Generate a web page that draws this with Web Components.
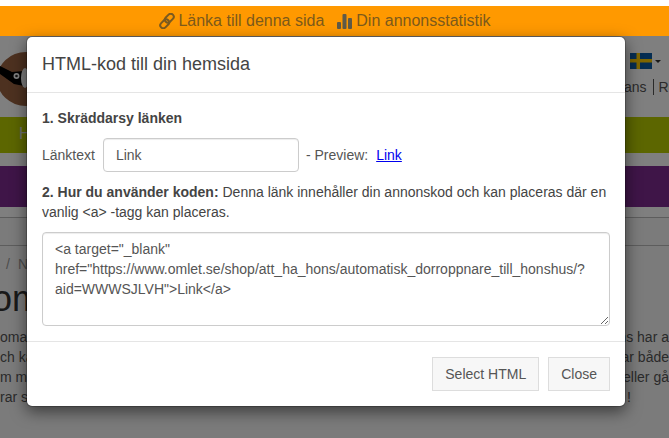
<!DOCTYPE html>
<html lang="sv">
<head>
<meta charset="utf-8">
<title>HTML-kod till din hemsida</title>
<style>
  html, body { margin: 0; height: 438px; overflow: hidden; background: #fff; }
  body { position: relative; font: 14px/20px "Liberation Sans", Arial, sans-serif; color: #444; }
</style>
</head>
<body>
<promo-bar>
  <span slot="link">Länka till denna sida</span>
  <span slot="stats">Din annonsstatistik</span>
</promo-bar>
<site-page></site-page>
<html-modal>
  <span slot="title">HTML-kod till din hemsida</span>
</html-modal>

<script>
class PromoBar extends HTMLElement {
  constructor() {
    super();
    this.attachShadow({ mode: 'open' });
    this.shadowRoot.innerHTML = `
      <style>
        :host { display: block; margin-top: 6px; height: 30px; background: #ff9900; color: #7c5a1c; font-size: 16px; }
        .row { height: 30px; display: flex; align-items: center; justify-content: center; padding-right: 19px; gap: 13px; }
        .item { display: flex; align-items: center; gap: 3px; }
        svg { display: block; }
      </style>
      <div class="row">
        <div class="item">
          <svg width="16" height="16" viewBox="0 0 16 16" fill="none" stroke="#7a5a20" stroke-width="2">
            <rect x="7.3" y="0.2" width="6" height="10" rx="3" transform="rotate(45 10.3 5.2)"/>
            <rect x="2.7" y="5.8" width="6" height="10" rx="3" transform="rotate(45 5.7 10.8)"/>
          </svg>
          <slot name="link"></slot>
        </div>
        <div class="item">
          <svg width="16" height="15" viewBox="0 0 16 15" fill="#5f5a48">
            <rect x="0" y="8" width="4" height="7" rx="1"/>
            <rect x="5.5" y="0" width="4" height="15" rx="1"/>
            <rect x="11" y="4" width="4" height="11" rx="1"/>
          </svg>
          <slot name="stats"></slot>
        </div>
      </div>`;
  }
}

// Sidan bakom dialogen, syns bara i kanterna
class SitePage extends HTMLElement {
  constructor() {
    super();
    this.attachShadow({ mode: 'open' });
    this.shadowRoot.innerHTML = `
      <style>
        :host { display: block; height: 402px; overflow: hidden; background: #fff; color: #555; }
        .head { height: 81px; display: flex; justify-content: space-between; align-items: flex-start; }
        .logo { margin-top: 16px; display: block; }
        .tools { padding-top: 17px; width: 42px; display: flex; flex-direction: column; align-items: flex-start; }
        .flag-row { display: flex; align-items: center; gap: 3px; margin-left: 3px; }
        .caret { width: 0; height: 0; border: 3.5px solid transparent; border-top-color: #333; border-bottom: 0; }
        .links { margin: 10px 0 0 -3px; font-size: 14px; line-height: 16px; white-space: nowrap; display: flex; gap: 6px; }
        .links i { font-style: normal; border-left: 1px solid #555; padding-left: 5px; }
        .olive { height: 36px; background: #b8cc00; color: #ddd; padding-left: 19px; line-height: 34px; font-size: 16px; }
        .purple { height: 41px; margin-top: 13px; background: #7e2a90; }
        .lower { margin-top: 10px; background: #f7f7f7; height: 221px; }
        .band { height: 27px; border-top: 1px solid #bbb; border-bottom: 1px solid #bbb; background: #f7f7f7; }
        .trail { height: 33px; padding: 8px 0 0 6px; box-sizing: border-box; color: #999; display: flex; gap: 8px; }
        h1 { margin: 0 0 0 -8px; font-size: 36px; line-height: 40px; font-weight: 400; color: #333; }
        .lines { margin-top: 8px; }
        .line { display: flex; justify-content: space-between; height: 20px; line-height: 20px; white-space: nowrap; }
      </style>
      <div class="head">
        <svg class="logo" width="40" height="56" viewBox="0 0 40 56">
          <ellipse cx="26" cy="27" rx="29" ry="27" fill="#9a6240"/>
          <path d="M0 14 L12 20 L24 19 L24 34 L14 32 L0 22Z" fill="#000"/>
          <circle cx="16.5" cy="24" r="3" fill="#fff"/>
          <circle cx="16.5" cy="24" r="1.3" fill="#222"/>
          <ellipse cx="25" cy="26" rx="4" ry="10" fill="#fff"/>
        </svg>
        <div class="tools">
          <div class="flag-row">
            <svg width="22" height="16" viewBox="0 0 22 16">
              <rect width="22" height="16" fill="#0b5aa5"/>
              <rect x="6.5" width="3.5" height="16" fill="#fecc00"/>
              <rect y="6" width="22" height="3.5" fill="#fecc00"/>
            </svg>
            <span class="caret"></span>
          </div>
          <div class="links"><span>ans</span><i>Re</i></div>
        </div>
      </div>
      <div class="olive">H</div>
      <div class="purple"></div>
      <div class="lower">
        <div class="band"></div>
        <div class="trail"><span>/</span><span>N</span></div>
        <h1>om</h1>
        <div class="lines">
          <div class="line"><span>oma</span><span>ns har a</span></div>
          <div class="line"><span>ch ka</span><span>ar både</span></div>
          <div class="line"><span>m mö</span><span>eller gå</span></div>
          <div class="line"><span>rar s</span><span style="margin-right:38px">!</span></div>
        </div>
      </div>`;
  }
}

class HtmlModal extends HTMLElement {
  constructor() {
    super();
    this.attachShadow({ mode: 'open' });
    this.shadowRoot.innerHTML = `
      <style>
        :host { display: block; position: absolute; left: 0; top: 36px; width: 669px; height: 402px; background: rgba(0,0,0,.5); padding-left: 26px; box-sizing: border-box; }
        .dialog { width: 600px; box-sizing: border-box; background: #fff; background-clip: padding-box; border: 1px solid rgba(0,0,0,.2); border-radius: 6px; box-shadow: 0 5px 15px rgba(0,0,0,.5); }
        header { height: 56px; box-sizing: border-box; border-bottom: 1px solid #e5e5e5; padding: 17px 15px 0; font-size: 18px; line-height: 20px; color: #444; }
        .body { padding: 15px; }
        .step { margin: 0; }
        .row { display: flex; align-items: center; margin: 10px 0; color: #555; height: 34px; }
        input, textarea { box-sizing: border-box; border: 1px solid #ccc; border-radius: 4px; background: #fff; color: #555; font: 14px/20px "Liberation Sans", Arial, sans-serif; padding: 6px 12px; margin: 0; box-shadow: inset 0 1px 1px rgba(0,0,0,.075); outline: 0; }
        input { width: 196px; height: 34px; margin: 0 7px 0 8px; }
        a { color: #0000ee; margin-left: 8px; }
        textarea { display: block; width: 568px; height: 94px; margin-top: 10px; }
        footer { border-top: 1px solid #e5e5e5; padding: 15px; display: flex; justify-content: flex-end; gap: 9px; }
        button { height: 34px; box-sizing: border-box; border: 1px solid #ddd; background: #f7f7f7; color: #555; font: 14px/20px "Liberation Sans", Arial, sans-serif; padding: 6px 12px; }
      </style>
      <div class="dialog">
        <header><slot name="title"></slot></header>
        <div class="body">
          <p class="step"><b>1. Skräddarsy länken</b></p>
          <div class="row">
            <span>Länktext</span>
            <input type="text" value="Link">
            <span>- Preview:</span>
            <a href="#">Link</a>
          </div>
          <p class="step"><b>2. Hur du använder koden:</b> Denna länk innehåller din annonskod och kan placeras där en vanlig &lt;a&gt; -tagg kan placeras.</p>
          <textarea>&lt;a target="_blank" href="https://www.omlet.se/shop/att_ha_hons/automatisk_dorroppnare_till_honshus/?aid=WWWSJLVH"&gt;Link&lt;/a&gt;</textarea>
        </div>
        <footer>
          <button type="button">Select HTML</button>
          <button type="button">Close</button>
        </footer>
      </div>`;
  }
}

customElements.define('promo-bar', PromoBar);
customElements.define('site-page', SitePage);
customElements.define('html-modal', HtmlModal);
</script>
</body>
</html>
